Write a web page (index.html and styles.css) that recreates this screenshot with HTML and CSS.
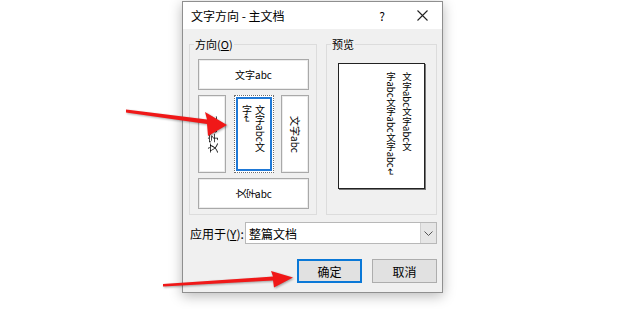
FILE: index.html
```html
<!DOCTYPE html>
<html lang="zh-CN">
<head>
<meta charset="UTF-8">
<title>文字方向 - 主文档</title>
<link rel="stylesheet" href="styles.css">
</head>
<body>

<div class="dialog">
  <div class="titlebar">
    <span class="title">文字方向 - 主文档</span>
    <span class="tbtn">?</span>
    <span class="tbtn">
      <svg width="11" height="11" viewBox="0 0 11 11"><path d="M0.5 0.5 L10.5 10.5 M10.5 0.5 L0.5 10.5" stroke="#222" stroke-width="1.1" fill="none"/></svg>
    </span>
  </div>

  <div class="body">
    <div class="groups">
      <fieldset class="group dir">
        <legend>方向(<u>O</u>)</legend>
        <div class="opt horiz">文字abc</div>
        <div class="opt-row">
          <div class="opt side up"><span>文字abc</span></div>
          <div class="opt sel"><div class="sel-in"><span class="vert">文字abc文<br>字↵</span></div></div>
          <div class="opt side down"><span>文字abc</span></div>
        </div>
        <div class="opt horiz"><span class="rot">文</span><span class="rot">字</span>abc</div>
      </fieldset>

      <fieldset class="group prev">
        <legend>预览</legend>
        <div class="page">
          <span class="vert">文字abc文字abc文<br>字abc文字abc文字abc↵</span>
        </div>
      </fieldset>
    </div>

    <div class="apply">
      <span class="apply-label">应用于(<u>Y</u>):</span>
      <div class="select">
        <span class="select-val">整篇文档</span>
        <span class="select-btn">
          <svg width="9" height="5" viewBox="0 0 9 5"><path d="M0.5 0.5 L4.5 4.5 L8.5 0.5" stroke="#555" fill="none"/></svg>
        </span>
      </div>
    </div>

    <div class="actions">
      <button class="btn primary">确定</button>
      <button class="btn">取消</button>
    </div>
  </div>
</div>

<!-- red arrows drawn over the screenshot -->
<svg class="arrows" width="620" height="309" viewBox="0 0 620 309">
  <polygon points="126,109.5 207,119.5 205,112 227,125 208,136 207,124 126,112.5"/>
  <polygon points="163,284 273,276.5 271,271 293,277.5 274,287.5 273,280.5 163,286.5"/>
</svg>

</body>
</html>
```

FILE: styles.css
```css
body {
  margin: 0;
  background: #fff;
  font-family: "Noto Sans CJK SC", "Liberation Sans", sans-serif;
  position: relative;
  height: 309px;
  overflow: hidden;
}
.dialog {
  margin: 1px 0 0 182px;
  width: 261px;
  height: 292px;
  box-sizing: border-box;
  border: 1px solid #8f8f8f;
  background: #f0f0f0;
  box-shadow: 0 3px 12px rgba(0,0,0,0.28);
  display: flex;
  flex-direction: column;
}
.titlebar {
  height: 27px;
  background: #fff;
  display: flex;
  align-items: center;
  padding-left: 8px;
  font-size: 12px;
  color: #000;
}
.title {
  flex: 1;
}
.tbtn {
  width: 40px;
  height: 27px;
  display: flex;
  align-items: center;
  justify-content: center;
  font-size: 12px;
}
.body {
  padding: 8px 5px 0 6px;
}
.groups {
  display: flex;
  gap: 9px;
}
.group {
  margin: 0;
  border: 1px solid #dcdcdc;
  min-width: 0;
}
.group legend {
  font-size: 11px;
  line-height: 14px;
  padding: 0 1px;
  color: #000;
}
.dir {
  width: 128px;
  box-sizing: border-box;
  padding: 8px 7px 5px 8px;
  display: flex;
  flex-direction: column;
  gap: 5px;
}
.dir legend {
  margin-left: -4px;
}
.prev {
  flex: 1;
  padding: 12px 11px 0 11px;
}
.prev legend {
  margin-left: -7px;
}

/* orientation option buttons */
.opt {
  background: #fff;
  border: 1px solid #a9a9a9;
  box-shadow: inset 0 0 0 1px #ececec;
  box-sizing: border-box;
  display: flex;
  align-items: center;
  justify-content: center;
  font-size: 10px;
  color: #000;
}
.horiz {
  height: 31px;
}
.opt-row {
  display: flex;
  justify-content: space-between;
  height: 78px;
}
.side {
  width: 28px;
}
.side span {
  writing-mode: vertical-rl;
  text-orientation: sideways;
}
.up span {
  transform: rotate(180deg);
}
.sel {
  width: 40px;
  border: 1px dotted #6e6e6e;
  box-shadow: none;
  padding: 1px;
  align-items: stretch;
}
.sel-in {
  flex: 1;
  border: 2px solid #1e78d6;
  background: #fff;
  display: flex;
  justify-content: center;
  padding-top: 6px;
}
.vert {
  writing-mode: vertical-rl;
  text-orientation: mixed;
  line-height: 13px;
}
.rot {
  display: inline-block;
  transform: rotate(-90deg);
}

/* preview page */
.page {
  width: 87px;
  height: 126px;
  box-sizing: border-box;
  background: #fff;
  border: 1px solid #222;
  box-shadow: 1px 1px 0 #777;
  display: flex;
  justify-content: flex-end;
  padding: 8px 9px 0 0;
  font-size: 9.5px;
}
.page .vert {
  line-height: 16px;
}

/* apply to row */
.apply {
  display: flex;
  align-items: center;
  margin-top: 7px;
  padding-left: 1px;
  font-size: 12px;
}
.apply-label {
  width: 55px;
}
.select {
  flex: 1;
  height: 22px;
  box-sizing: border-box;
  background: #fff;
  border: 1px solid #b8b8b8;
  display: flex;
  align-items: center;
}
.select-val {
  flex: 1;
  padding-left: 3px;
}
.select-btn {
  width: 15px;
  height: 100%;
  background: #e6e6e6;
  border-left: 1px solid #cfcfcf;
  display: flex;
  align-items: center;
  justify-content: center;
}

/* ok / cancel */
.actions {
  display: flex;
  justify-content: flex-end;
  gap: 10px;
  margin-top: 15px;
}
.btn {
  width: 65px;
  height: 24px;
  background: #e1e1e1;
  border: 1px solid #adadad;
  font-family: inherit;
  font-size: 12px;
  color: #000;
  padding: 0;
}
.btn.primary {
  border: 2px solid #0a78d7;
}

.arrows {
  position: absolute;
  top: 0;
  left: 0;
  pointer-events: none;
}
.arrows polygon {
  fill: #f01818;
  filter: drop-shadow(1px 1px 1px rgba(0,0,0,0.35));
}
```
